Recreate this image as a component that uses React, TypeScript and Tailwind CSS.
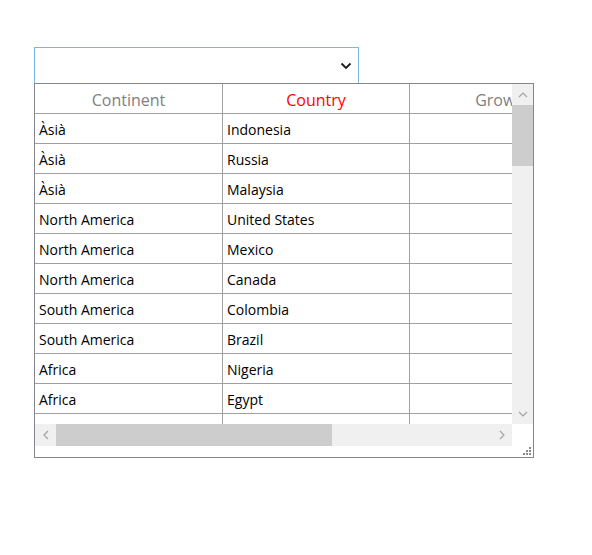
import React from 'react';

const rows: [string, string][] = [
  ['Àsià', 'Indonesia'],
  ['Àsià', 'Russia'],
  ['Àsià', 'Malaysia'],
  ['North America', 'United States'],
  ['North America', 'Mexico'],
  ['North America', 'Canada'],
  ['South America', 'Colombia'],
  ['South America', 'Brazil'],
  ['Africa', 'Nigeria'],
  ['Africa', 'Egypt'],
  ['Europe', 'Germany'],
];

function Chevron({ dir, className }: { dir: 'up' | 'down' | 'left' | 'right'; className?: string }) {
  const d = {
    up: 'M1 6 L5 2 L9 6',
    down: 'M1 2 L5 6 L9 2',
    left: 'M6 1 L2 5 L6 9',
    right: 'M2 1 L6 5 L2 9',
  }[dir];
  const vert = dir === 'up' || dir === 'down';
  return (
    <svg width={vert ? 10 : 8} height={vert ? 8 : 10} viewBox={vert ? '0 0 10 8' : '0 0 8 10'} className={className}>
      <path d={d} fill="none" stroke="#a3a3a3" strokeWidth="1.2" />
    </svg>
  );
}

function Grip() {
  const dots = [
    [6, 0],
    [3, 3],
    [6, 3],
    [0, 6],
    [3, 6],
    [6, 6],
  ];
  return (
    <svg width="9" height="9" viewBox="0 0 9 9">
      {dots.map(([x, y]) => (
        <rect key={`${x}-${y}`} x={x} y={y} width="2" height="2" fill="#8a8a8a" />
      ))}
    </svg>
  );
}

export default function App() {
  return (
    <div className="min-h-[555px] w-[592px] bg-white pl-[34px] pt-[47px] font-['Open_Sans','Noto_Sans',sans-serif]">
      {/* combo box */}
      <div className="flex h-[37px] w-[325px] items-center justify-end border border-[#7eb4ea] bg-white pr-[6px]">
        <svg width="12" height="8" viewBox="0 0 12 8">
          <path d="M1.5 1.5 L6 6 L10.5 1.5" fill="none" stroke="#1a1a1a" strokeWidth="1.8" />
        </svg>
      </div>

      {/* data grid */}
      <div className="-mt-px flex h-[375px] w-[500px] flex-col border border-[#828790] bg-white">
        <div className="flex h-[340px]">
          <div className="w-[477px] overflow-hidden">
            <div className="flex h-[30px] w-[600px] border-b border-[#a0a0a0] text-[16px] text-[#808080]">
              <div className="flex w-[188px] shrink-0 items-center justify-center border-r border-[#a0a0a0] pt-[3px]">Continent</div>
              <div className="flex w-[187px] shrink-0 items-center justify-center border-r border-[#a0a0a0] pt-[3px] text-[#ff0000]">Country</div>
              <div className="flex w-[187px] shrink-0 items-center justify-center border-r border-[#a0a0a0] pt-[3px]">Growth</div>
            </div>
            {rows.map(([continent, country], i) => (
              <div key={i} className="flex h-[30px] w-[600px] border-b border-[#a0a0a0] text-[14px] text-black">
                <div className="flex w-[188px] shrink-0 items-center border-r border-[#a0a0a0] pl-[4px] pt-[2px]">{continent}</div>
                <div className="flex w-[187px] shrink-0 items-center border-r border-[#a0a0a0] pl-[4px] pt-[2px]">{country}</div>
                <div className="w-[187px] shrink-0 border-r border-[#a0a0a0]" />
              </div>
            ))}
          </div>
          <div className="flex w-[21px] flex-col bg-[#f0f0f0]">
            <div className="flex h-[21px] items-center justify-center">
              <Chevron dir="up" />
            </div>
            <div className="h-[61px] bg-[#cdcdcd]" />
            <div className="flex-1" />
            <div className="flex h-[21px] items-center justify-center">
              <Chevron dir="down" />
            </div>
          </div>
        </div>
        <div className="flex h-[22px]">
          <div className="flex w-[477px] bg-[#f0f0f0]">
            <div className="flex w-[21px] items-center justify-center">
              <Chevron dir="left" />
            </div>
            <div className="w-[276px] bg-[#cdcdcd]" />
            <div className="flex-1" />
            <div className="flex w-[21px] items-center justify-center">
              <Chevron dir="right" />
            </div>
          </div>
          <div className="w-[21px] bg-white" />
        </div>
        <div className="flex flex-1 items-end justify-end pb-px pr-px">
          <Grip />
        </div>
      </div>
    </div>
  );
}
